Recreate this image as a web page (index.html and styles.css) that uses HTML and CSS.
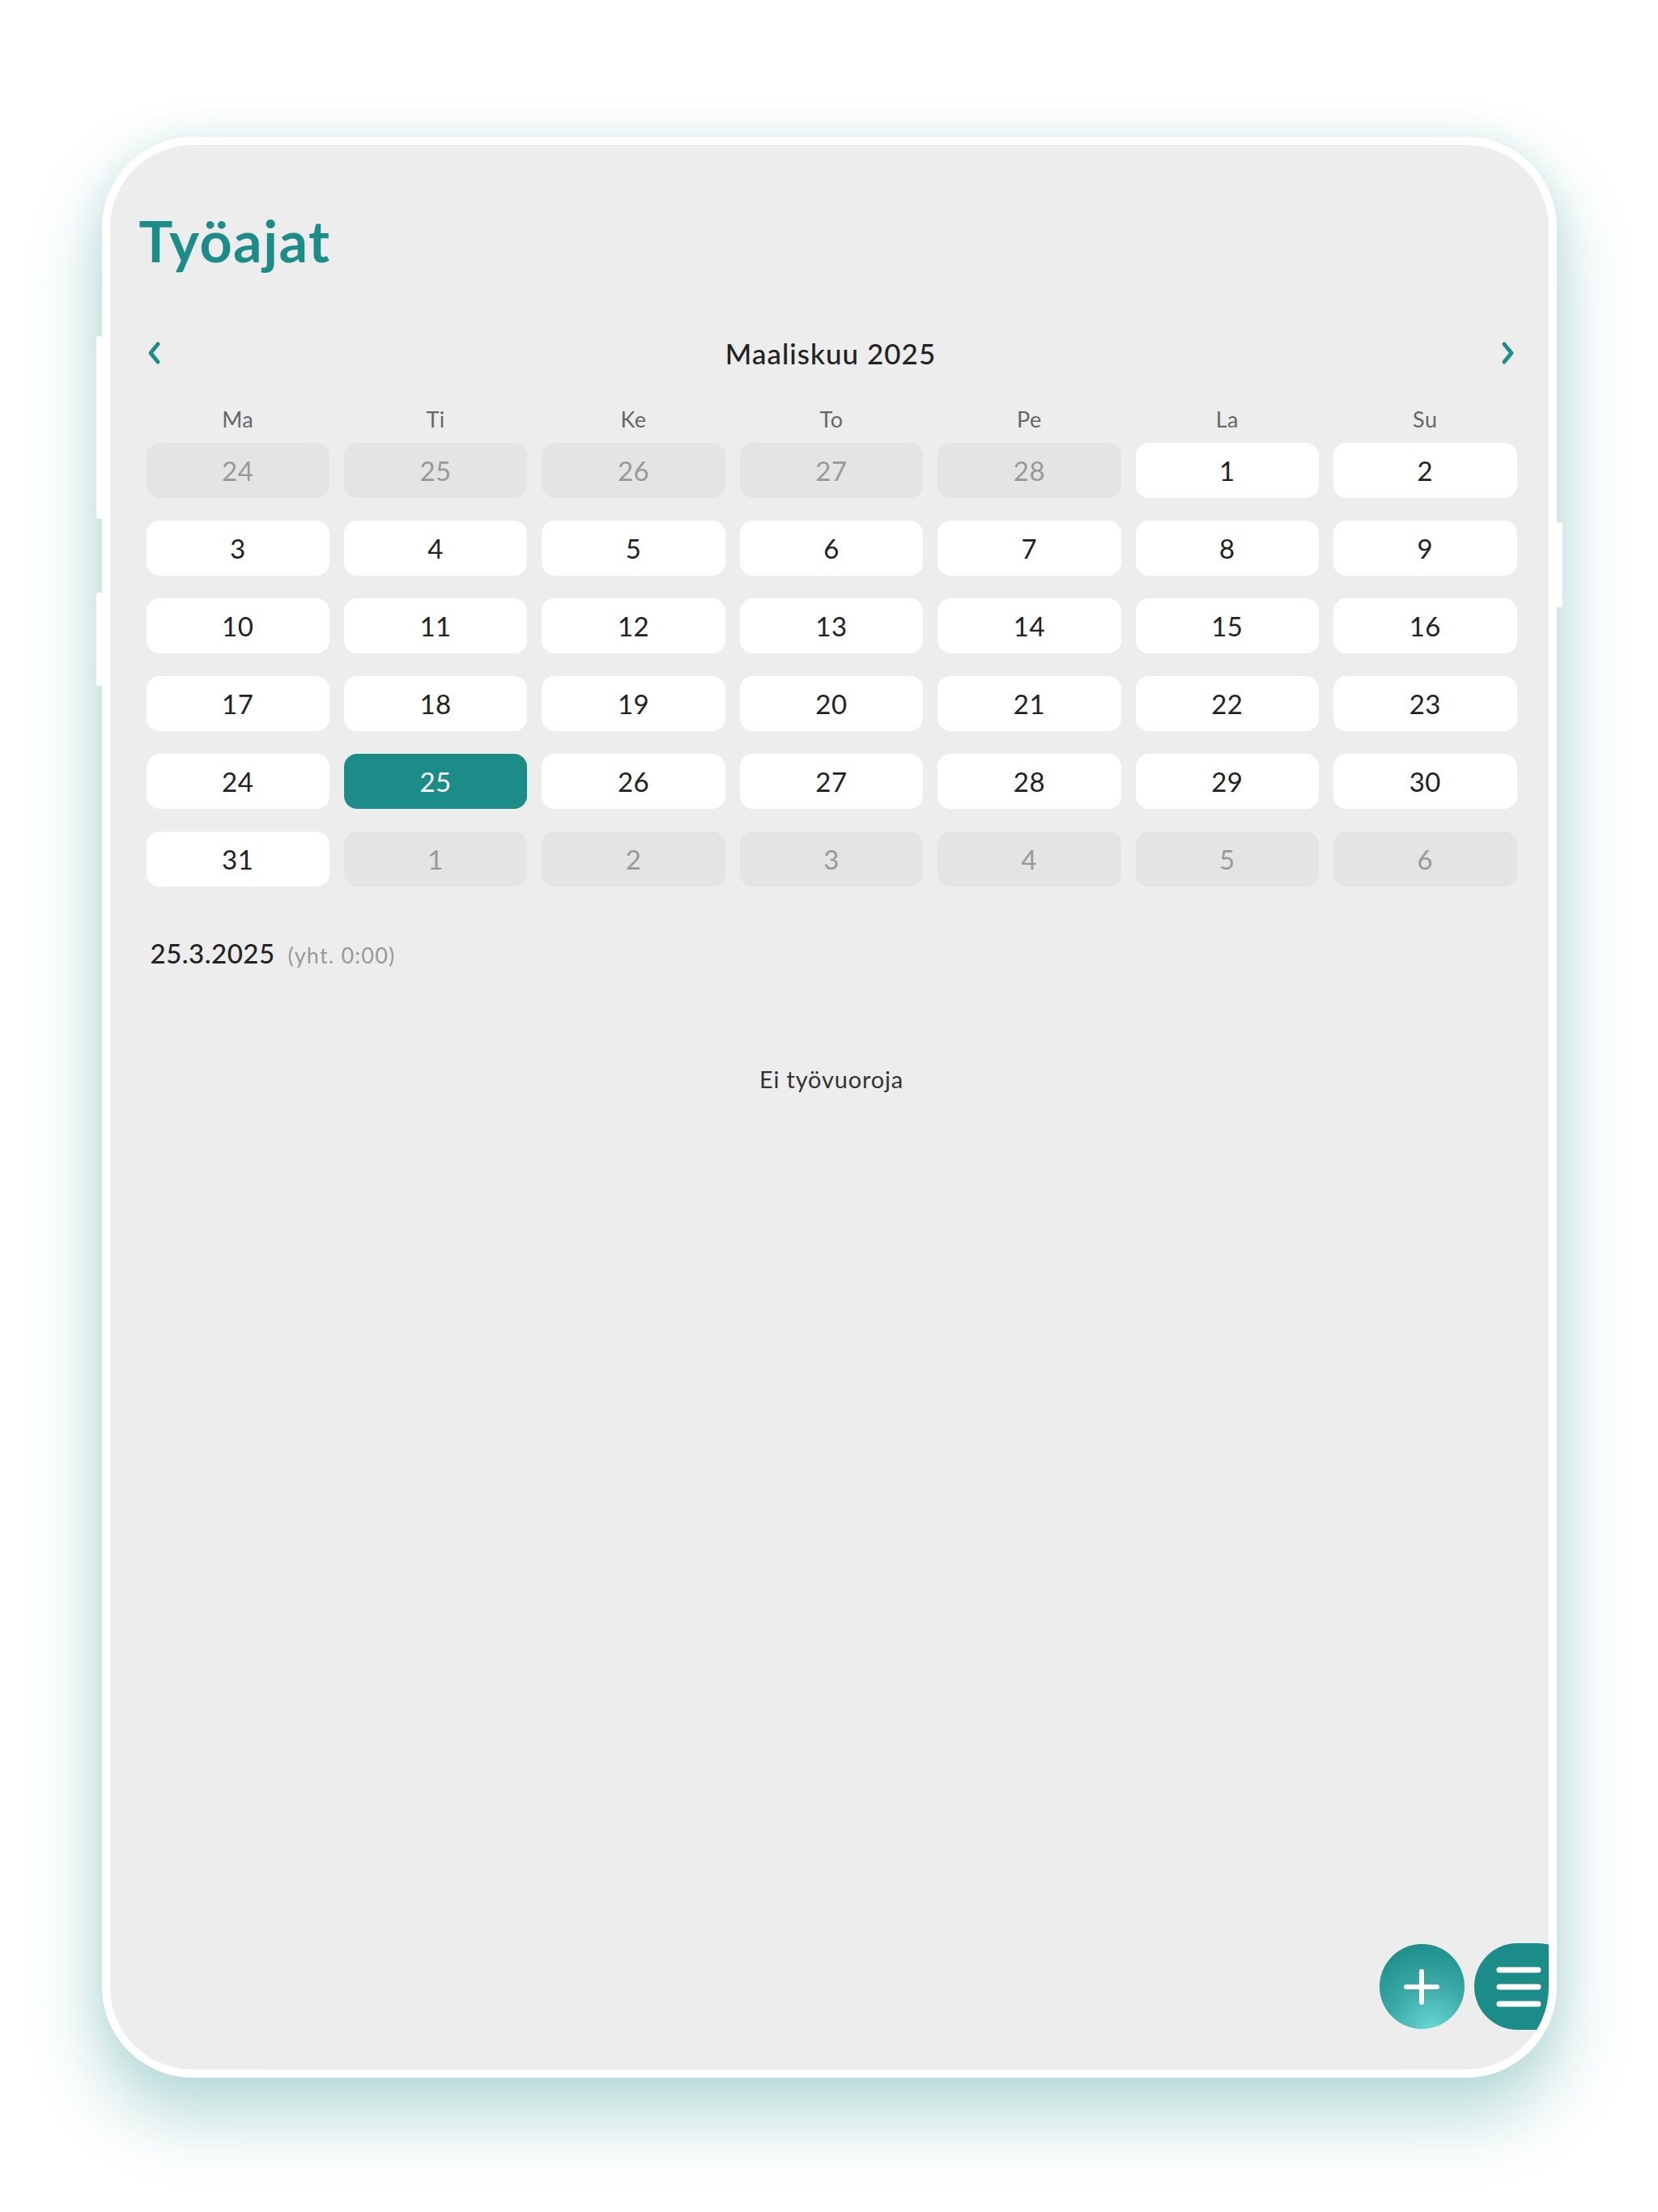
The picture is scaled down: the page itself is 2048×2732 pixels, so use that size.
FILE: index.html
```html
<!DOCTYPE html>
<html lang="fi">
<head>
  <meta charset="UTF-8" />
  <meta name="viewport" content="width=device-width, initial-scale=1.0" />
  <title>Työajat</title>
  <link rel="stylesheet" href="styles.css">
</head>
<body>

  <div class="device">
    <span class="side-btn side-left-1"></span>
    <span class="side-btn side-left-2"></span>
    <span class="side-btn side-right"></span>

    <div class="screen">
      <h1 class="title">Työajat</h1>

      <div class="calendar">
        <div class="month-bar">
          <button class="nav-btn" aria-label="Edellinen kuukausi">
            <svg width="18" height="30" viewBox="0 0 18 30"><path d="M14 4 L5 15 L14 26" fill="none" stroke="#1c8c89" stroke-width="5" stroke-linecap="round" stroke-linejoin="round"/></svg>
          </button>
          <div class="month-name">Maaliskuu 2025</div>
          <button class="nav-btn" aria-label="Seuraava kuukausi">
            <svg width="18" height="30" viewBox="0 0 18 30"><path d="M4 4 L13 15 L4 26" fill="none" stroke="#1c8c89" stroke-width="5" stroke-linecap="round" stroke-linejoin="round"/></svg>
          </button>
        </div>

        <div class="weekdays">
          <span>Ma</span><span>Ti</span><span>Ke</span><span>To</span><span>Pe</span><span>La</span><span>Su</span>
        </div>

        <div class="days">
          <div class="day other">24</div>
          <div class="day other">25</div>
          <div class="day other">26</div>
          <div class="day other">27</div>
          <div class="day other">28</div>
          <div class="day">1</div>
          <div class="day">2</div>

          <div class="day">3</div>
          <div class="day">4</div>
          <div class="day">5</div>
          <div class="day">6</div>
          <div class="day">7</div>
          <div class="day">8</div>
          <div class="day">9</div>

          <div class="day">10</div>
          <div class="day">11</div>
          <div class="day">12</div>
          <div class="day">13</div>
          <div class="day">14</div>
          <div class="day">15</div>
          <div class="day">16</div>

          <div class="day">17</div>
          <div class="day">18</div>
          <div class="day">19</div>
          <div class="day">20</div>
          <div class="day">21</div>
          <div class="day">22</div>
          <div class="day">23</div>

          <div class="day">24</div>
          <div class="day selected">25</div>
          <div class="day">26</div>
          <div class="day">27</div>
          <div class="day">28</div>
          <div class="day">29</div>
          <div class="day">30</div>

          <div class="day">31</div>
          <div class="day other">1</div>
          <div class="day other">2</div>
          <div class="day other">3</div>
          <div class="day other">4</div>
          <div class="day other">5</div>
          <div class="day other">6</div>
        </div>

        <div class="selected-date">
          <span class="date">25.3.2025</span>
          <span class="total">(yht. 0:00)</span>
        </div>

        <p class="empty">Ei työvuoroja</p>
      </div>

      <div class="fabs">
        <button class="fab fab-add" aria-label="Lisää">
          <svg width="44" height="44" viewBox="0 0 44 44"><path d="M22 3 V41 M3 22 H41" stroke="#fff" stroke-width="6" stroke-linecap="round"/></svg>
        </button>
        <button class="fab fab-menu" aria-label="Valikko">
          <svg width="56" height="50" viewBox="0 0 56 50"><path d="M4 4 H52 M4 25 H52 M4 46 H52" stroke="#fff" stroke-width="7" stroke-linecap="round"/></svg>
        </button>
      </div>
    </div>
  </div>

</body>
</html>
```

FILE: styles.css
```css
body {
  margin: 0;
  background: #fff;
  font-family: Lato, "Noto Sans", sans-serif;
  display: flex;
  justify-content: center;
  padding-top: 169px;
  height: 2732px;
  box-sizing: border-box;
  overflow: hidden;
}

.device {
  position: relative;
  width: 1797px;
  height: 2397px;
  box-sizing: border-box;
  border: 10px solid #fff;
  border-radius: 112px;
  background: #ededed;
  box-shadow: 0 45px 80px 10px rgba(27, 140, 136, 0.28), 0 0 40px rgba(27, 140, 136, 0.1);
}

.side-btn {
  position: absolute;
  width: 8px;
  background: #fff;
  border-radius: 3px;
}

.side-left-1 { left: -17px; top: 236px; height: 226px; }
.side-left-2 { left: -17px; top: 553px; height: 115px; }
.side-right { right: -17px; top: 466px; height: 105px; }

.screen {
  position: relative;
  height: 100%;
  border-radius: 102px;
  overflow: hidden;
  padding: 78px 36px 0;
  box-sizing: border-box;
}

.title {
  margin: 0;
  font-size: 70px;
  line-height: 1.17;
  font-weight: 700;
  letter-spacing: 1.5px;
  color: #1c8c89;
}

.calendar {
  margin: 0 3px 0 9px;
}

.month-bar {
  display: flex;
  align-items: center;
  justify-content: space-between;
  height: 60px;
  margin-top: 67px;
}

.nav-btn {
  background: none;
  border: none;
  padding: 0;
  width: 24px;
  display: flex;
  justify-content: center;
  cursor: pointer;
}

.nav-btn:first-child {
  margin-left: -3px;
}

.nav-btn:last-child {
  margin-right: -1px;
}

.month-name {
  font-size: 35px;
  font-weight: 500;
  color: #222;
  letter-spacing: 1px;
}

.weekdays {
  display: grid;
  grid-template-columns: repeat(7, 1fr);
  column-gap: 18px;
  margin-top: 32px;
  height: 40px;
  align-items: center;
  text-align: center;
  font-size: 27px;
  letter-spacing: 0.5px;
  color: #666;
}

.days {
  display: grid;
  grid-template-columns: repeat(7, 1fr);
  column-gap: 18px;
  row-gap: 28px;
  margin-top: 9px;
}

.day {
  height: 68px;
  border-radius: 16px;
  background: #fff;
  color: #222;
  font-size: 33px;
  letter-spacing: 0.5px;
  display: flex;
  align-items: center;
  justify-content: center;
}

.day.other {
  background: #e4e4e4;
  color: #999;
}

.day.selected {
  background: #1c8c89;
  color: #fff;
}

.selected-date {
  display: flex;
  align-items: baseline;
  gap: 16px;
  margin-top: 62px;
  padding-left: 5px;
  height: 40px;
}

.selected-date .date {
  font-size: 33px;
  font-weight: 500;
  letter-spacing: 0.5px;
  color: #222;
}

.selected-date .total {
  font-size: 27px;
  color: #999;
  letter-spacing: 1.2px;
}

.empty {
  margin: 116px 0 0;
  line-height: 40px;
  text-align: center;
  font-size: 29px;
  letter-spacing: 0.8px;
  color: #333;
}

.fabs {
  position: absolute;
  right: -40px;
  bottom: 49px;
  display: flex;
  align-items: center;
  gap: 12px;
}

.fab {
  border: none;
  padding: 0;
  cursor: pointer;
  display: flex;
  align-items: center;
}

.fab-add {
  width: 105px;
  height: 105px;
  border-radius: 50%;
  justify-content: center;
  background: radial-gradient(circle at 62% 100%, #69d8d4 0%, #3aa9a5 45%, #1c8c89 90%);
}

.fab-menu {
  width: 132px;
  height: 107px;
  border-radius: 54px;
  padding-left: 27px;
  box-sizing: border-box;
  background: #1c8c89;
}
```
